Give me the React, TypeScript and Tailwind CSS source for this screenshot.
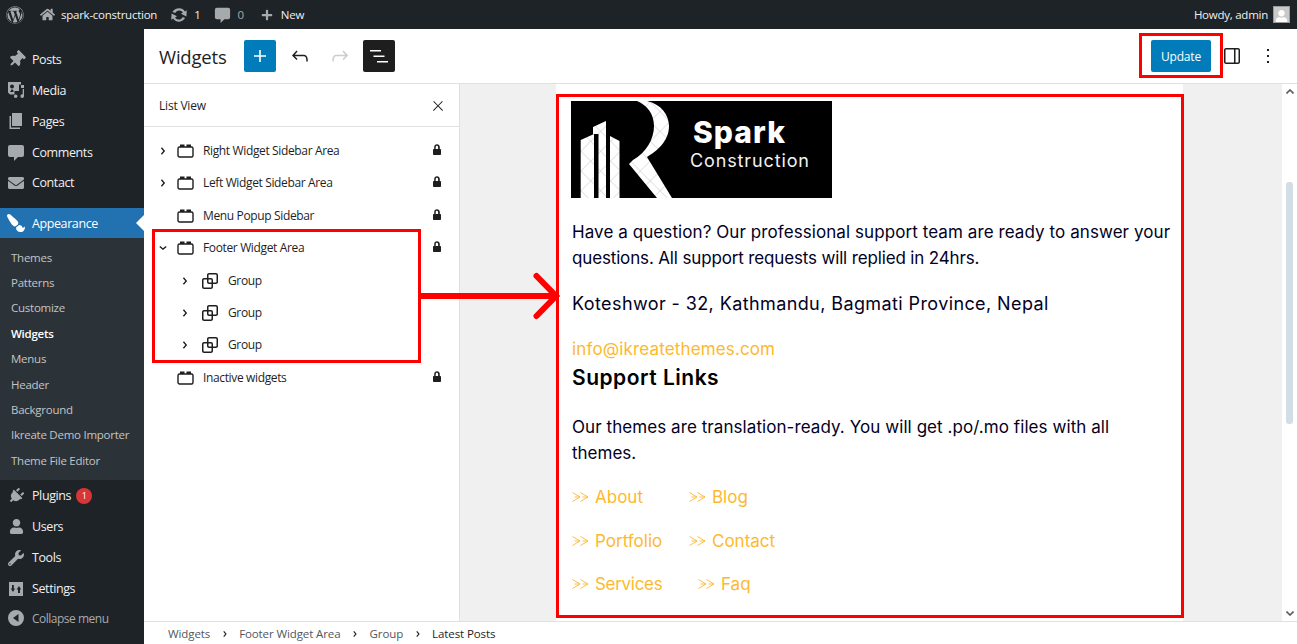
import React from "react";
import { FaWordpress, FaHome, FaPlus, FaThumbtack, FaEnvelope, FaPaintBrush, FaPlug, FaUser, FaWrench } from "react-icons/fa";

const I = ({ d, size = 24, cls = "", vb = "0 0 24 24" }: { d: string; size?: number; cls?: string; vb?: string }) => (
  <svg width={size} height={size} viewBox={vb} fill="currentColor" className={cls}><path fillRule="evenodd" d={d} /></svg>
);
const P = {
  plus: "M18 11.2h-5.2V6h-1.6v5.2H6v1.6h5.2V18h1.6v-5.2H18z",
  undo: "M18.3 11.7c-.6-.6-1.4-.9-2.3-.9H6.7l2.9-3.3-1.1-1-4.5 5L8.5 16l1-1-2.7-2.7H16c.5 0 .9.2 1.3.5 1 1 1 3.4 1 4.5v.3h1.5v-.2c0-1.5 0-4.3-1.5-5.7z",
  redo: "M15.6 6.5l-1.1 1 2.9 3.3H8c-.9 0-1.7.3-2.3.9-1.4 1.5-1.4 4.2-1.4 5.6v.2h1.5v-.3c0-1.1 0-3.5 1-4.5.3-.3.7-.5 1.3-.5h9.2L14.5 15l1.1 1.1 4.6-4.6-4.6-5z",
  list: "M3 6h11v1.5H3V6Zm3.5 5.5h11V13h-11v-1.5ZM21 17H10v1.5h11V17Z",
  drawer: "M18 4H6c-1.1 0-2 .9-2 2v12c0 1.1.9 2 2 2h12c1.1 0 2-.9 2-2V6c0-1.1-.9-2-2-2zm-4 14.5H6c-.3 0-.5-.2-.5-.5V6c0-.3.2-.5.5-.5h8v13zm4.5-.5c0 .3-.2.5-.5.5h-2.5v-13H18c.3 0 .5.2.5.5v12z",
  more: "M13 19h-2v-2h2v2zm0-6h-2v-2h2v2zm0-6h-2V5h2v2z",
  close: "M13 11.8l6.1-6.3-1-1-6.1 6.2-6.1-6.2-1 1 6.1 6.3-6.5 6.7 1 1 6.5-6.6 6.5 6.6 1-1z",
  right: "M10.8622 8.04053L14.2805 12.0286L10.8622 16.0167L9.72327 15.0405L12.3049 12.0286L9.72327 9.01672L10.8622 8.04053Z",
  down: "m15.99 10.889-3.988 3.418-3.988-3.418.976-1.14 3.012 2.582 3.012-2.581.976 1.139Z",
  lock: "M15 11h-.2V9c0-1.5-1.2-2.8-2.8-2.8S9.2 7.5 9.2 9v2H9c-.6 0-1 .4-1 1v4c0 .6.4 1 1 1h6c.6 0 1-.4 1-1v-4c0-.6-.4-1-1-1zm-1.8 0h-2.5V9c0-.7.6-1.2 1.2-1.2s1.2.6 1.2 1.2v2z",
  group: "M18 4h-7c-1.1 0-2 .9-2 2v3H6c-1.1 0-2 .9-2 2v7c0 1.1.9 2 2 2h7c1.1 0 2-.9 2-2v-3h3c1.1 0 2-.9 2-2V6c0-1.1-.9-2-2-2zm-4.5 14c0 .3-.2.5-.5.5H6c-.3 0-.5-.2-.5-.5v-7c0-.3.2-.5.5-.5h3V13c0 1.1.9 2 2 2h2.5v3zm0-4.5H11c-.3 0-.5-.2-.5-.5v-2.5H13c.3 0 .5.2.5.5v2.5zm5-.5c0 .3-.2.5-.5.5h-3V11c0-1.1-.9-2-2-2h-2.5V6c0-.3.2-.5.5-.5h7c.3 0 .5.2.5.5v7z",
};

const Area = () => (
  <svg width="17" height="14" viewBox="0 0 17 14" fill="none" className="text-[#1e1e1e]">
    <rect x="1" y="3" width="15" height="10" rx="1.5" stroke="currentColor" strokeWidth="1.4" />
    <path d="M3 0.500h4.500v2.500H3zM9.500 0.500H14v2.500H9.500z" fill="currentColor" />
  </svg>
);

const MediaI = () => (
  <svg width="20" height="20" viewBox="0 0 20 20" fill="currentColor"><path fillRule="evenodd" d="M2 2h13v2.5h-2V11H8.5v3.500H4L2 12.500zM6 4.500a2 2 0 1 0 0 4 2 2 0 0 0 0-4zM4 12h3.500v-1.500L6 9z" /><path d="M11 12.500h7V9h-1.300v5.400a1.800 1.800 0 1 0 1.300 1.700V12.500zM9.700 18a1.800 1.800 0 1 0 0-3.600 1.800 1.800 0 0 0 0 3.600z" /><path d="M15 5h3v3h-3z" /></svg>
);
const PagesI = () => (
  <svg width="20" height="20" viewBox="0 0 20 20" fill="currentColor"><path d="M6 2h10v13H6z" /><path d="M3.500 5H5v11.500h9V18H3.500z" /></svg>
);
const CommentI = ({ s = 20 }: { s?: number }) => (
  <svg width={s} height={s} viewBox="0 0 20 20" fill="currentColor"><path d="M4 3h12a2 2 0 0 1 2 2v8a2 2 0 0 1-2 2h-4l-4 4v-4H4a2 2 0 0 1-2-2V5a2 2 0 0 1 2-2z" /></svg>
);
const SettingsI = () => (
  <svg width="20" height="20" viewBox="0 0 20 20" fill="currentColor"><path fillRule="evenodd" d="M3 3h14v14H3zM6 6v3.500H4.800L7 13l2-3.500H7.800V6zM12 14v-3.500h-1.400L13 7l2.200 3.500H14V14z" /></svg>
);
const CollapseI = () => (
  <svg width="20" height="20" viewBox="0 0 20 20" fill="currentColor"><path fillRule="evenodd" d="M10 2a8 8 0 1 1 0 16 8 8 0 0 1 0-16zM12.500 6 7 10l5.500 4z" /></svg>
);
const UpdateI = () => (
  <svg width="20" height="20" viewBox="0 0 20 20" fill="currentColor"><path d="M10.200 3.300c2.400 0 4.500 1.200 5.700 3.100l1.900-1.100-.4 6.100-5.400-2.700 1.900-1.100c-.8-1.300-2.200-2.100-3.700-2.100-1.700 0-3.200 1-3.900 2.600L3.400 7c1.200-2.200 3.900-3.700 6.800-3.700zM9.800 16.700c-2.400 0-4.500-1.200-5.700-3.100l-1.900 1.100.4-6.100 5.400 2.700-1.900 1.100c.8 1.300 2.200 2.100 3.700 2.100 1.700 0 3.200-1 3.900-2.600l2.400 1.200c-1.200 2.200-3.900 3.700-6.800 3.700z" /></svg>
);

const top = [
  { label: "Posts", icon: <FaThumbtack size={17} className="rotate-45" /> },
  { label: "Media", icon: <MediaI /> },
  { label: "Pages", icon: <PagesI /> },
  { label: "Comments", icon: <CommentI /> },
  { label: "Contact", icon: <FaEnvelope size={16} /> },
];
const subs = ["Themes", "Patterns", "Customize", "Widgets", "Menus", "Header", "Background", "Ikreate Demo Importer", "Theme File Editor"];
const bottom = [
  { label: "Users", icon: <FaUser size={15} /> },
  { label: "Tools", icon: <FaWrench size={16} /> },
  { label: "Settings", icon: <SettingsI /> },
];

const MenuRow = ({ icon, label, extra, h = "h-[30.75px]" }: { icon: React.ReactNode; label: string; extra?: React.ReactNode; h?: string }) => (
  <div className={`${h} flex items-center text-[#f0f0f1]`}>
    <div className="w-[32px] flex items-center justify-center text-[#a7aaad] shrink-0">{icon}</div>
    <span className="mt-[2px]">{label}</span>
    {extra}
  </div>
);

const Sidebar = () => (
  <aside className="w-[144px] shrink-0 bg-[#1d2327] pt-[15.3px] text-[12.5px] tracking-[-0.4px]">
    {top.map((t) => <MenuRow key={t.label} {...t} />)}
    <div className="relative mt-[10.2px] h-[30px] bg-[#2271b1] text-white flex items-center">
      <div className="w-[32px] flex items-center justify-center shrink-0"><FaPaintBrush size={18} className="-scale-x-100" /></div>
      <span className="mt-[2px]">Appearance</span>
      <span className="absolute right-0 top-[7px] w-0 h-0 border-y-[8px] border-y-transparent border-r-[8px] border-r-white" />
    </div>
    <div className="bg-[#2c3338] pt-[6.4px] h-[242px] text-[11.5px] tracking-[-0.25px]">
      {subs.map((s) => (
        <div key={s} className={`h-[25.4px] pl-[11px] flex items-center whitespace-nowrap ${s === "Widgets" ? "text-white font-semibold" : "text-[#c3c4c7]"}`}>{s}</div>
      ))}
    </div>
    <MenuRow
      h="h-[31px]"
      icon={<FaPlug size={16} className="rotate-45" />}
      label="Plugins"
      extra={<span className="ml-[5px] w-4 h-4 rounded-full bg-[#d63638] text-white text-[9px] flex items-center justify-center">1</span>}
    />
    {bottom.map((t) => <MenuRow key={t.label} h="h-[31px]" {...t} />)}
    <div className="h-[30px] -mt-[1px] flex items-center text-[#a7aaad]">
      <div className="w-[32px] flex items-center justify-center shrink-0"><CollapseI /></div>
      <span className="mt-[2px] text-[12px] tracking-[-0.5px]">Collapse menu</span>
    </div>
  </aside>
);

const AdminBar = () => (
  <header className="h-[29px] shrink-0 bg-[#1d2327] flex items-center text-[#f0f0f1] text-[11.5px] tracking-[-0.25px]">
    <FaWordpress size={18} className="ml-[6px] text-[#a7aaad]" />
    <FaHome size={15} className="ml-[16px] text-[#a7aaad]" />
    <span className="ml-[6px]">spark-construction</span>
    <span className="ml-[12px] text-[#a7aaad]"><UpdateI /></span>
    <span className="ml-[5px]">1</span>
    <span className="ml-[13px] text-[#a7aaad]"><CommentI s={19} /></span>
    <span className="ml-[5px] text-[#a7aaad]">0</span>
    <FaPlus size={12} className="ml-[17px] text-[#a7aaad]" />
    <span className="ml-[8px]">New</span>
    <span className="ml-auto">Howdy, admin</span>
    <div className="ml-[5px] mr-[7px] w-[17px] h-[17px] bg-[#c9c9c9] border border-[#9a9a9a] flex items-end justify-center overflow-hidden">
      <FaUser size={13} className="text-white translate-y-[1px]" />
    </div>
  </header>
);

const EditorHeader = () => (
  <div className="h-[55px] shrink-0 border-b border-[#e0e0e0] bg-white flex items-center pl-[15px] pb-[1px]">
    <h1 className="text-[18.5px] mt-[3px] font-medium text-[#1e1e1e] w-[85px] tracking-[-0.2px]">Widgets</h1>
    <button className="w-8 h-8 rounded-[2px] bg-[#007cba] text-white flex items-center justify-center"><I d={P.plus} /></button>
    <span className="ml-2 w-8 flex justify-center text-[#1e1e1e]"><I d={P.undo} /></span>
    <span className="ml-2 w-8 flex justify-center text-[#cccccc]"><I d={P.redo} /></span>
    <button className="ml-[7px] w-8 h-8 rounded-[2px] bg-[#1e1e1e] text-white flex items-center justify-center"><I d={P.list} /></button>
    <button className="ml-auto w-[60px] h-8 pt-[2px] rounded-[2px] bg-[#007cba] text-white text-[12px] tracking-[-0.2px]">Update</button>
    <span className="ml-[9px] text-[#1e1e1e]"><I d={P.drawer} /></span>
    <span className="ml-[12px] mr-[17px] text-[#1e1e1e]"><I d={P.more} /></span>
  </div>
);

const Row = ({ label, icon, chevron, lock, nested, cls = "" }: { label: string; icon: React.ReactNode; chevron?: string; lock?: boolean; nested?: boolean; cls?: string }) => (
  <div className={`${nested ? "h-[32px]" : "h-[32.3px]"} flex items-center text-[12px] text-[#1e1e1e] tracking-[-0.36px] ${cls}`}>
    <div className={`${nested ? "w-[34px] pl-[20px]" : "w-[10px]"} flex justify-center shrink-0`}>
      {chevron ? <I d={chevron} size={22} cls="shrink-0" /> : null}
    </div>
    <div className={`flex justify-center items-center shrink-0 ${nested ? "w-[24px] ml-[6px]" : "w-[17px] ml-[9px]"}`}>{icon}</div>
    <span className={nested ? "ml-[6px]" : "ml-[9px]"}>{label}</span>
    {lock ? <span className="ml-auto mr-[10px] -translate-y-[1px]"><I d={P.lock} size={24} /></span> : null}
  </div>
);

const ListPanel = () => (
  <div className="w-[316px] shrink-0 bg-white border-r border-[#e0e0e0] flex flex-col">
    <div className="h-[43px] shrink-0 border-b border-[#e0e0e0] flex items-center justify-between pl-[15px] pr-[13px] pt-[1px] text-[12px] font-medium text-[#1e1e1e] tracking-[-0.2px]">
      <span>List View</span>
      <I d={P.close} size={16} />
    </div>
    <div className="pt-[8px] pl-[14px]">
      <Row label="Right Widget Sidebar Area" icon={<Area />} chevron={P.right} lock />
      <Row label="Left Widget Sidebar Area" icon={<Area />} chevron={P.right} lock />
      <Row label="Menu Popup Sidebar" icon={<Area />} lock />
      <Row label="Footer Widget Area" icon={<Area />} chevron={P.down} lock />
      <Row label="Group" icon={<I d={P.group} size={24} />} chevron={P.right} nested cls="mt-[1px]" />
      <Row label="Group" icon={<I d={P.group} size={24} />} chevron={P.right} nested />
      <Row label="Group" icon={<I d={P.group} size={24} />} chevron={P.right} nested />
      <Row label="Inactive widgets" icon={<Area />} lock cls="mt-[1px]" />
    </div>
  </div>
);

const Logo = () => (
  <svg width="261" height="97" viewBox="0 0 261 97" className="block">
    <defs>
      <pattern id="hatch" width="14" height="14" patternUnits="userSpaceOnUse" patternTransform="rotate(45)">
        <rect width="14" height="14" fill="#ffffff" />
        <path d="M0 0H14M0 0V14" stroke="#bdbdbd" strokeWidth="0.8" />
      </pattern>
    </defs>
    <rect width="261" height="97" fill="#000" />
    <g fill="url(#hatch)">
      <path d="M9.700 39 23 33V97H9.700z" />
      <path d="M22 26 35 20V97H27.500V33H22z" />
      <path d="M39 35 48.500 40V97H39z" />
      <path d="M52 0H76C90 3 98 14 98 25 98 40 86 50 76 56L101 97H86L58 63 62 59C75 52 83 38 83 25 83 13 76 4 66 0z" />
    </g>
    <text x="122" y="42" fill="#fff" fontFamily="Inter, sans-serif" fontWeight="800" fontSize="30" textLength="92">Spark</text>
    <text x="119" y="66" fill="#f2f2f2" fontFamily="Inter, sans-serif" fontSize="18" textLength="119">Construction</text>
  </svg>
);

const Arrows = () => (
  <svg width="17" height="10" viewBox="0 0 17 10" fill="none" stroke="#fdb92d" strokeWidth="0.9" className="shrink-0"><path d="M0.500 0.500 8 5 0.500 9.500M2.500 5H8M8.500 0.500 16 5 8.500 9.500M10.500 5H16" /></svg>
);
const LinkI = ({ t, w }: { t: string; w?: string }) => (
  <span className={`flex items-center gap-[6px] ${w ?? ""}`}><Arrows />{t}</span>
);

const Canvas = () => (
  <div className="flex-1 min-w-0 bg-[#f0f0f0] pl-[96px] pr-[99px]">
    <div className="h-full bg-white pt-[17px] pl-[15px] text-[17px] leading-[26px] text-[#02011f] font-['Inter',sans-serif] overflow-hidden">
      <Logo />
      <div className="pl-[1px]">
        <p className="mt-[21px] whitespace-nowrap"><span className="tracking-[0.08px]">Have a question? Our professional support team are ready to answer your</span><br /><span className="tracking-[-0.15px]">questions. All support requests will replied in 24hrs.</span></p>
        <p className="mt-[20px] text-[18px] tracking-[0.4px]">Koteshwor - 32, Kathmandu, Bagmati Province, Nepal</p>
        <p className="mt-[19px] text-[#fdb92d] tracking-[0.14px]">info@ikreatethemes.com</p>
        <h2 className="mt-[3px] text-[21px] font-semibold text-black tracking-[0.5px]">Support Links</h2>
        <p className="mt-[23px] whitespace-nowrap"><span className="tracking-[0.07px]">Our themes are translation-ready. You will get .po/.mo files with all</span><br />themes.</p>
        <div className="mt-[18px] flex text-[#fdb92d] h-[26px]"><LinkI t="About" w="w-[117px]" /><LinkI t="Blog" /></div>
        <div className="mt-[17.5px] flex text-[#fdb92d] h-[26px]"><LinkI t="Portfolio" w="w-[117px]" /><LinkI t="Contact" /></div>
        <div className="mt-[17.5px] flex text-[#fdb92d] h-[26px]"><LinkI t="Services" w="w-[126px] tracking-[-0.3px]" /><LinkI t="Faq" /></div>
      </div>
    </div>
  </div>
);

const Scrollbar = () => (
  <div className="w-[15px] shrink-0 bg-white flex flex-col items-center text-[#5a5a5a] relative">
    <svg width="8" height="5" viewBox="0 0 8 5" className="mt-[5px]" fill="none" stroke="currentColor" strokeWidth="1.6"><path d="M0.500 4.500 4 1l3.500 3.500" /></svg>
    <div className="mt-[88px] w-[7px] h-[242px] rounded-[3px] bg-[#d3dde6]" />
    <svg width="8" height="5" viewBox="0 0 8 5" className="mt-auto mb-[5px]" fill="none" stroke="currentColor" strokeWidth="1.6"><path d="M0.500 0.500 4 4l3.500-3.500" /></svg>
  </div>
);

const Breadcrumb = () => (
  <div className="h-[23px] shrink-0 border-t border-[#e0e0e0] bg-white flex items-center pl-[24px] pt-[1px] text-[11.5px] text-[#50575e] tracking-[-0.1px]">
    <span>Widgets</span>
    <I d={P.right} size={18} cls="text-[#1e1e1e] mx-[5.5px]" />
    <span>Footer Widget Area</span>
    <I d={P.right} size={18} cls="text-[#1e1e1e] mx-[5.5px]" />
    <span>Group</span>
    <I d={P.right} size={18} cls="text-[#1e1e1e] mx-[5.5px]" />
    <span className="text-[#1e1e1e]">Latest Posts</span>
  </div>
);

const Annotations = () => (
  <>
    <div className="absolute left-[1139px] top-[33px] w-[84px] h-[45px] border-[3px] border-[#ff0000]" />
    <div className="absolute left-[152px] top-[229px] w-[269px] h-[134px] border-[3px] border-[#ff0000]" />
    <div className="absolute left-[556px] top-[94px] w-[628px] h-[524px] border-[3px] border-[#ff0000]" />
    <svg className="absolute left-[420px] top-[270px]" width="140" height="52" viewBox="0 0 140 52" fill="none" stroke="#ff0000" strokeLinecap="round">
      <path d="M0 26H134" strokeWidth="6" strokeLinecap="butt" />
      <path d="M116.500 6 136 26 116.500 46" strokeWidth="6" />
    </svg>
  </>
);

export default function App() {
  return (
    <div className="relative w-[1297px] h-[644px] overflow-hidden flex flex-col bg-white font-['Open_Sans',sans-serif]">
      <AdminBar />
      <div className="flex flex-1 min-h-0">
        <Sidebar />
        <main className="flex-1 min-w-0 flex flex-col">
          <EditorHeader />
          <div className="flex-1 min-h-0 flex">
            <ListPanel />
            <Canvas />
            <Scrollbar />
          </div>
          <Breadcrumb />
        </main>
      </div>
      <Annotations />
    </div>
  );
}
